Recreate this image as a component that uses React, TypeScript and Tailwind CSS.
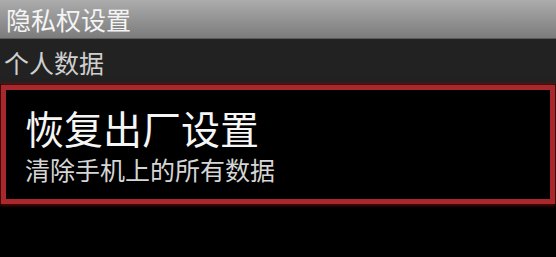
export default function App() {
  const font = { fontFamily: '"Noto Sans CJK SC", "Noto Sans", sans-serif' };
  return (
    <div className="w-[556px] h-[257px] bg-black overflow-hidden" style={font}>
      <div className="h-[39px] bg-gradient-to-b from-[#acacac] to-[#7c7c7c] border-b border-[#5a5a5a] flex items-center pl-[6px]">
        <span className="text-[25px] leading-[30px] text-[#f4f4f4]">隐私权设置</span>
      </div>
      <div className="h-[45px] bg-[#222222] flex items-center pl-[4px]">
        <span className="text-[25px] leading-[30px] text-[#cfcfcf]">个人数据</span>
      </div>
      <div className="h-[1px] bg-[#1a0a0a]" />
      <div className="mx-[1px] h-[119px] border-[5px] border-[#a8282c] shadow-[0_0_4px_1px_#6a1010] bg-black flex flex-col pt-[15px] pl-[19px]">
        <div className="text-[39px] leading-[44px] text-[#f6f6f6]">恢复出厂设置</div>
        <div className="text-[25px] leading-[30px] text-[#d6d6d6] mt-[5px]">清除手机上的所有数据</div>
      </div>
    </div>
  );
}
